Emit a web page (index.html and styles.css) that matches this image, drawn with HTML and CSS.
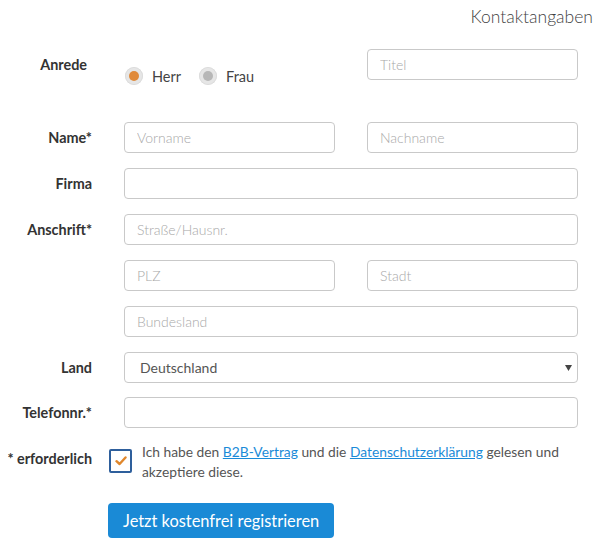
FILE: index.html
```html
<!DOCTYPE html>
<html lang="de">
<head>
<meta charset="utf-8">
<link rel="stylesheet" href="styles.css">
</head>
<body>
<div class="page">
  <div class="heading">Kontaktangaben</div>
  <form class="form">
    <div class="row row-anrede">
      <div class="label label-anrede">Anrede</div>
      <div class="radios">
        <label class="radio"><span class="dot dot-on"></span><span>Herr</span></label>
        <label class="radio"><span class="dot"></span><span>Frau</span></label>
      </div>
      <input class="field" placeholder="Titel">
    </div>
    <div class="row">
      <div class="label">Name*</div>
      <input class="field" placeholder="Vorname">
      <input class="field" placeholder="Nachname">
    </div>
    <div class="row">
      <div class="label">Firma</div>
      <input class="field wide">
    </div>
    <div class="row">
      <div class="label">Anschrift*</div>
      <input class="field wide" placeholder="Straße/Hausnr.">
    </div>
    <div class="row">
      <div class="label"></div>
      <input class="field" placeholder="PLZ">
      <input class="field" placeholder="Stadt">
    </div>
    <div class="row">
      <div class="label"></div>
      <input class="field wide" placeholder="Bundesland">
    </div>
    <div class="row">
      <div class="label">Land</div>
      <div class="select wide">
        <span class="select-value">Deutschland</span>
        <svg class="caret" width="7" height="6" viewBox="0 0 7 6"><path d="M0 0H7L3.5 6Z" fill="#444"/></svg>
      </div>
    </div>
    <div class="row row-tel">
      <div class="label">Telefonnr.*</div>
      <input class="field wide">
    </div>
    <div class="row2 row-consent">
      <div class="label">* erforderlich</div>
      <div class="consent">
        <span class="checkbox">
          <svg width="12" height="10" viewBox="0 0 12 10"><path d="M1.5 5.2L4.6 8 10.5 1.5" fill="none" stroke="#e0872c" stroke-width="2.4" stroke-linecap="round" stroke-linejoin="round"/></svg>
        </span>
        <p class="consent-text">Ich habe den <a href="#">B2B-Vertrag</a> und die <a href="#">Datenschutzerklärung</a> gelesen und akzeptiere diese.</p>
      </div>
    </div>
    <div class="row2 row-submit">
      <div></div>
      <div><button type="button" class="btn">Jetzt kostenfrei registrieren</button></div>
    </div>
  </form>
</div>
</body>
</html>
```

FILE: styles.css
```css
* { box-sizing: border-box; }
html, body { margin: 0; padding: 0; background: #fff; }
body { font-family: Lato, "Open Sans", sans-serif; color: #333; }
.page { width: 600px; height: 546px; position: relative; }
.heading {
  text-align: right;
  font-size: 17.5px;
  font-weight: 300;
  color: #3f3f3f;
  padding: 7px 7px 0 0;
  height: 49px;
  line-height: 20px;
}
.form { display: flex; flex-direction: column; gap: 15px; }
.row {
  display: grid;
  grid-template-columns: 92px 211px 211px;
  column-gap: 32px;
  align-items: start;
}
.label {
  font-size: 14.4px;
  font-weight: 700;
  color: #333;
  text-align: right;
  height: 31px;
  line-height: 31px;
  white-space: nowrap;
}
.label-anrede { padding-right: 5px; }
.row-anrede { margin-bottom: 27px; }
.row-anrede + .row { margin-top: -5px; }
.row-tel { margin-top: -1px; }
.field {
  height: 31px;
  width: 100%;
  border: 1px solid #c9c9c9;
  border-radius: 4px;
  padding: 0 12px;
  font-family: Lato, sans-serif;
  font-size: 14px;
  color: #555;
  background: #fff;
  outline: none;
  margin: 0;
}
.field::placeholder { color: #a8a8a8; font-weight: 300; }
.wide { grid-column: 2 / 4; }
.radios { display: flex; gap: 17px; padding-top: 2px; margin-top: 16px; height: 20px; align-items: center; }
.radio { display: flex; align-items: center; gap: 9px; font-size: 14.5px; color: #444; padding-left: 1px; }
.dot {
  width: 18px; height: 18px; border-radius: 50%;
  background: #e6e6e6;
  box-shadow: inset 0 0 0 1px #dcdcdc;
  display: flex; align-items: center; justify-content: center;
}
.dot::after { content: ""; width: 10px; height: 10px; border-radius: 50%; background: #b7b7b7; }
.dot-on::after { background: #e08a3a; }
.select {
  position: relative;
  height: 31px;
  border: 1px solid #c9c9c9;
  border-radius: 4px;
  padding: 0 15px;
  display: flex; align-items: center;
  font-size: 14px;
  color: #555;
}
.caret { position: absolute; right: 5px; top: 12px; }
.row2 {
  display: grid;
  grid-template-columns: 92px 1fr;
  column-gap: 16px;
}
.row-consent { margin-top: 4px; }
.row-consent .label { height: 24px; line-height: 24px; }
.consent { display: flex; align-items: flex-start; gap: 10px; padding-left: 1px; }
.checkbox {
  flex: none;
  width: 23px; height: 24px;
  border: 2px solid #2e5f9c;
  border-radius: 2px;
  display: flex; align-items: center; justify-content: center;
  margin-top: 2px;
  background: #fff;
}
.consent-text {
  margin: -5px 0 0 0;
  font-size: 13.8px;
  line-height: 20px;
  color: #555;
  width: 440px;
}
.consent-text a { color: #1b8bd8; text-decoration: underline; }
.row-submit { margin-top: 6px; }
.btn {
  height: 35px;
  padding: 0 15px;
  border: none;
  border-radius: 4px;
  background: #1a8ad6;
  color: #fff;
  font-family: Lato, sans-serif;
  font-size: 16.4px;
}
```
